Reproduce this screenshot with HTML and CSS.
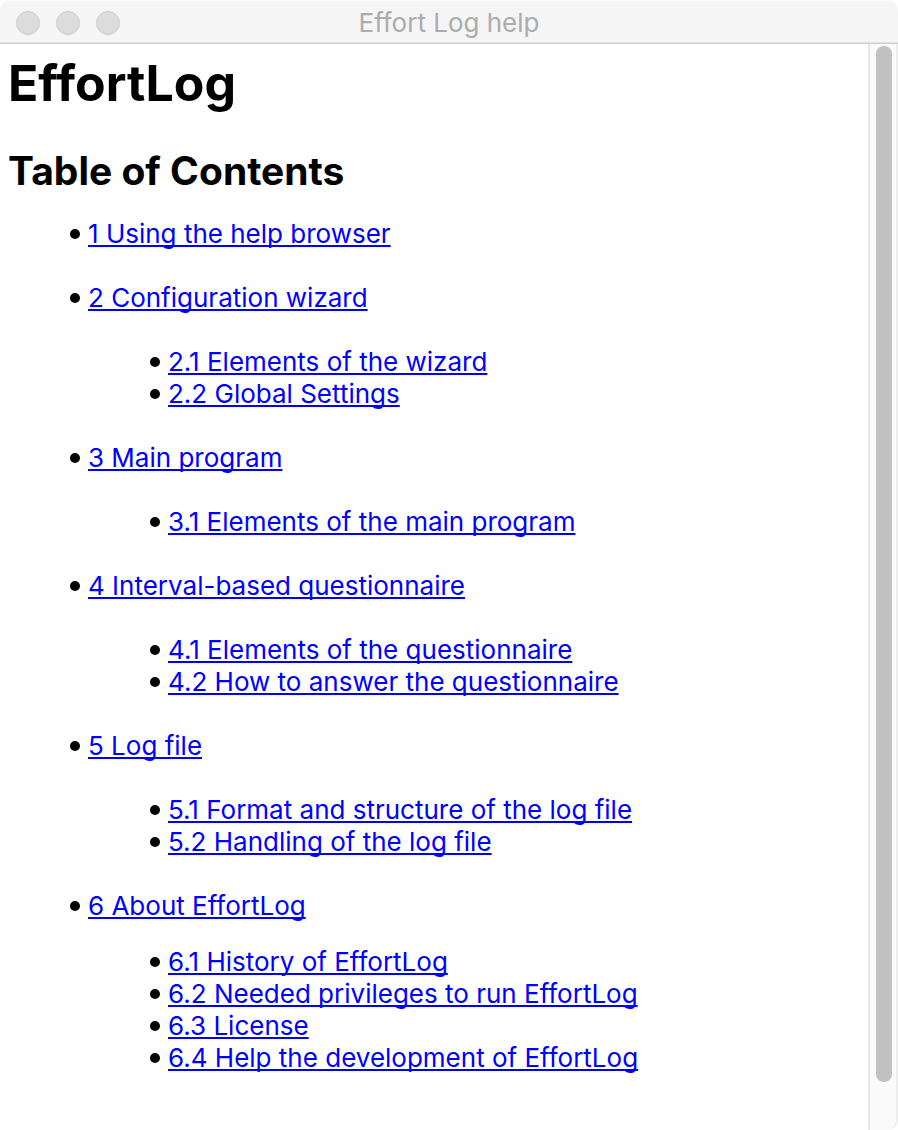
FILE: index.html
```html
<!DOCTYPE html>
<html lang="en">
<head>
<meta charset="utf-8">
<title>Effort Log help</title>
<link rel="stylesheet" href="styles.css">
</head>
<body>
<div class="window">
  <header class="titlebar">
    <div class="controls">
      <button class="control" type="button" aria-label="Close"></button>
      <button class="control" type="button" aria-label="Minimize"></button>
      <button class="control" type="button" aria-label="Zoom"></button>
    </div>
    <span class="title">Effort Log help</span>
  </header>
  <div class="viewport">
    <main class="page">
      <h1 class="heading">EffortLog</h1>
      <h2 class="subheading">Table of Contents</h2>
      <ul class="toc">
        <li><a href="#s1">1 Using the help browser</a></li>
        <li><a href="#s2">2 Configuration wizard</a>
          <ul class="sub">
            <li><a href="#s21">2.1 Elements of the wizard</a></li>
            <li><a href="#s22">2.2 Global Settings</a></li>
          </ul>
        </li>
        <li><a href="#s3">3 Main program</a>
          <ul class="sub">
            <li><a href="#s31">3.1 Elements of the main program</a></li>
          </ul>
        </li>
        <li><a href="#s4">4 Interval-based questionnaire</a>
          <ul class="sub">
            <li><a href="#s41">4.1 Elements of the questionnaire</a></li>
            <li><a href="#s42">4.2 How to answer the questionnaire</a></li>
          </ul>
        </li>
        <li><a href="#s5">5 Log file</a>
          <ul class="sub">
            <li><a href="#s51">5.1 Format and structure of the log file</a></li>
            <li><a href="#s52">5.2 Handling of the log file</a></li>
          </ul>
        </li>
        <li><a href="#s6">6 About EffortLog</a>
          <ul class="sub sub-close">
            <li><a href="#s61">6.1 History of EffortLog</a></li>
            <li><a href="#s62">6.2 Needed privileges to run EffortLog</a></li>
            <li><a href="#s63">6.3 License</a></li>
            <li><a href="#s64">6.4 Help the development of EffortLog</a></li>
          </ul>
        </li>
      </ul>
    </main>
    <div class="scrollbar"><div class="thumb"></div></div>
  </div>
</div>
</body>
</html>
```
FILE: styles.css
```css
* { box-sizing: border-box; }
body {
  margin: 0;
  background: #fff;
  color: #000;
  font-family: Inter, "Liberation Sans", sans-serif;
  font-size: 26px;
  line-height: 32px;
}
.window { display: flex; flex-direction: column; min-height: 100vh; }
.titlebar {
  display: grid;
  grid-template-columns: 1fr auto 1fr;
  align-items: center;
  height: 44px;
  padding: 2px 16px 0;
  background: #f5f5f5;
  border-bottom: 1px solid #cfcfcf;
  box-shadow: inset 0 -1px #e2e2e2, inset 0 1px #fafafa;
  border-radius: 10px 10px 0 0;
}
.controls { display: flex; gap: 16px; }
.control {
  width: 24px;
  height: 24px;
  padding: 0;
  border: 1px solid #cdcdcd;
  border-radius: 50%;
  background: #dcdcdc;
}
.title { color: #acacac; }
.viewport { display: flex; flex: 1; }
.page { flex: 1; padding: 8px 8px 0; }
.heading { margin: 0; font-size: 50px; line-height: 62px; font-weight: 700; }
.subheading { margin: 32px 0 22px; font-size: 39px; line-height: 50px; font-weight: 700; }
.toc, .sub { margin: 0; padding: 0 0 0 80px; list-style: none; }
.toc > li { margin-bottom: 32px; }
.toc li::before {
  content: "";
  float: left;
  width: 10px;
  height: 10px;
  margin: 11px 0 0 -18px;
  border-radius: 50%;
  background: #000;
}
.sub { margin-top: 32px; }
.sub-close { margin-top: 24px; }
a {
  color: #0000ff;
  text-decoration: underline;
  text-decoration-thickness: 2px;
  text-decoration-skip-ink: none;
  text-underline-offset: 2px;
}
.scrollbar {
  width: 30px;
  padding: 2px 4px 48px 6px;
  display: flex;
  background: #fafafa;
  border-left: 2px solid #e8e8e8;
  border-right: 2px solid #ededed;
  border-bottom-right-radius: 10px;
}
.thumb { flex: 1; border-radius: 8px; background: #c1c1c1; }
```
